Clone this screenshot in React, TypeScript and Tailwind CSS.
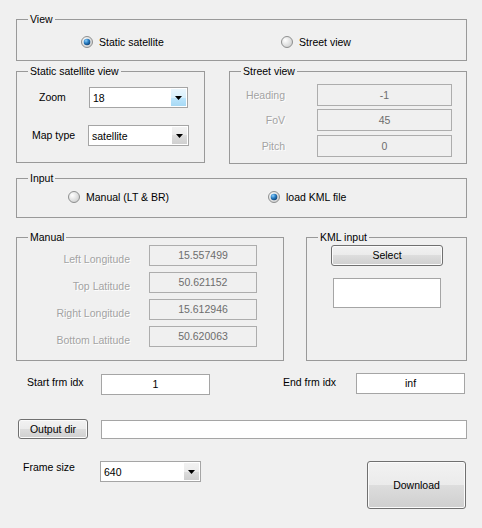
import { useId, type ReactNode } from "react";

const FONT = "font-['Liberation_Sans',Arial,sans-serif]";
const BTN_BG =
  "bg-[linear-gradient(to_bottom,#f2f2f2_0%,#ebebeb_50%,#dddddd_50%,#cfcfcf_100%)]";

function Group({
  title,
  className,
  children,
}: {
  title: string;
  className?: string;
  children?: ReactNode;
}) {
  return (
    <fieldset className={`shrink-0 border border-[#999999] ${className ?? ""}`}>
      <legend className="ml-[11px] px-[2px] leading-[12px]">{title}</legend>
      {children}
    </fieldset>
  );
}

function Radio({
  on,
  label,
  className,
}: {
  on?: boolean;
  label: string;
  className?: string;
}) {
  const id = useId().replace(/:/g, "");
  return (
    <div className={`flex h-[12px] items-center ${className ?? ""}`}>
      <svg width="12" height="12" viewBox="0 0 12 12" className="shrink-0">
        <defs>
          <radialGradient id={`g${id}`} cx="0.35" cy="0.35" r="0.7">
            <stop offset="0" stopColor="#ffffff" />
            <stop offset="1" stopColor="#cfd0d0" />
          </radialGradient>
          <radialGradient id={`b${id}`} cx="0.35" cy="0.3" r="0.75">
            <stop offset="0" stopColor="#8fd0fb" />
            <stop offset="0.5" stopColor="#2a7fc4" />
            <stop offset="1" stopColor="#0d3f72" />
          </radialGradient>
        </defs>
        <circle cx="6" cy="6" r="5.5" fill={`url(#g${id})`} stroke="#8e8f8f" />
        {on && <circle cx="6" cy="6" r="3.3" fill={`url(#b${id})`} />}
      </svg>
      <span className="ml-[6px] leading-[13px]">{label}</span>
    </div>
  );
}

function Combo({
  value,
  hot,
  className,
}: {
  value: string;
  hot?: boolean;
  className?: string;
}) {
  return (
    <div
      className={`flex h-[21px] shrink-0 border border-[#a5a5a5] bg-white ${className ?? ""}`}
    >
      <div className="flex-1 pl-[3px] pt-[1px] leading-[18px]">{value}</div>
      <div
        className={`m-[1px] ml-0 flex w-[15px] items-center justify-center ${
          hot
            ? "bg-[linear-gradient(to_bottom,#eaf6fd_0%,#d9f0fc_50%,#bee6fd_50%,#a7d9f5_100%)]"
            : BTN_BG
        }`}
      >
        <svg width="7" height="4" viewBox="0 0 7 4">
          <path d="M0 0h7L3.5 4z" fill="#000" />
        </svg>
      </div>
    </div>
  );
}

function Btn({ children, className }: { children: ReactNode; className?: string }) {
  return (
    <button
      type="button"
      className={`flex shrink-0 items-center justify-center rounded-[3px] border border-[#707070] ${BTN_BG} shadow-[inset_0_0_0_1px_#fbfbfb] leading-[13px] text-black ${className ?? ""}`}
    >
      {children}
    </button>
  );
}

function Edit({
  value,
  disabled,
  className,
}: {
  value?: string;
  disabled?: boolean;
  className?: string;
}) {
  return (
    <div
      className={`flex shrink-0 items-center justify-center border leading-[13px] ${
        disabled
          ? "border-[#adadad] bg-[#f0f0f0] text-[#6d6d6d]"
          : "border-[#a5a5a5] bg-white text-black"
      } ${className ?? ""}`}
    >
      {value}
    </div>
  );
}

const dim = "text-[#a3a3a3] [text-shadow:1px_1px_0_#ffffff]";

export default function App() {
  const street = [
    { label: "Heading", value: "-1", mt: "mt-[7px]" },
    { label: "FoV", value: "45", mt: "mt-[3px]" },
    { label: "Pitch", value: "0", mt: "mt-[4px]" },
  ];
  const manual = [
    { label: "Left Longitude", value: "15.557499" },
    { label: "Top Latitude", value: "50.621152" },
    { label: "Right Longitude", value: "15.612946" },
    { label: "Bottom Latitude", value: "50.620063" },
  ];

  return (
    <div
      className={`h-[528px] w-[482px] overflow-hidden bg-[#f0f0f0] pl-4 pt-[13px] text-[10.5px] text-black ${FONT}`}
    >
      <Group title="View" className="h-[48px] w-[451px]">
        <div className="ml-[64px] mt-[11px] flex">
          <Radio on label="Static satellite" className="w-[200px]" />
          <Radio label="Street view" />
        </div>
      </Group>

      <div className="mt-[4px] flex items-start">
        <Group title="Static satellite view" className="h-[98px] w-[189px]">
          <div className="mt-[10px] flex items-center">
            <span className="ml-[22px] w-[50px] leading-[13px]">Zoom</span>
            <Combo value="18" hot className="w-[99px]" />
          </div>
          <div className="mt-[17px] flex items-center">
            <span className="ml-[15px] w-[56px] leading-[13px]">Map type</span>
            <Combo value="satellite" className="w-[101px]" />
          </div>
        </Group>

        <Group title="Street view" className="ml-[24px] h-[99px] w-[238px]">
          {street.map((r) => (
            <div key={r.label} className={`flex items-center ${r.mt}`}>
              <span className={`w-[55px] text-right leading-[13px] ${dim}`}>{r.label}</span>
              <Edit disabled value={r.value} className="ml-[32px] h-[22px] w-[135px]" />
            </div>
          ))}
        </Group>
      </div>

      <Group title="Input" className="mt-[8px] h-[46px] w-[451px]">
        <div className="ml-[51px] mt-[7px] flex">
          <Radio label="Manual (LT & BR)" className="w-[200px]" />
          <Radio on label="load KML file" />
        </div>
      </Group>

      <div className="mt-[13px] flex items-start">
        <Group title="Manual" className="h-[130px] w-[268px]">
          {manual.map((r, i) => (
            <div
              key={r.label}
              className={`flex items-start ${i === 0 ? "mt-[2px]" : "mt-[6px]"}`}
            >
              <span className={`mt-[8px] w-[113px] text-right leading-[13px] ${dim}`}>
                {r.label}
              </span>
              <Edit disabled value={r.value} className="ml-[19px] h-[21px] w-[108px]" />
            </div>
          ))}
        </Group>

        <Group title="KML input" className="ml-[22px] h-[130px] w-[161px]">
          <Btn className="ml-[24px] mt-[2px] h-[21px] w-[112px]">Select</Btn>
          <Edit className="ml-[26px] mt-[12px] h-[30px] w-[108px]" />
        </Group>
      </div>

      <div className="mt-[13px] flex items-start">
        <span className="ml-[11px] mt-[2px] w-[74px] leading-[13px]">Start frm idx</span>
        <Edit value="1" className="h-[21px] w-[109px]" />
        <span className="ml-[73px] mt-[2px] w-[73px] leading-[13px]">End frm idx</span>
        <Edit value="inf" className="-mt-px h-[21px] w-[109px]" />
      </div>

      <div className="mt-[24px] flex items-start">
        <Btn className="ml-[2px] h-[20px] w-[70px]">Output dir</Btn>
        <Edit className="ml-[13px] mt-px h-[19px] w-[366px]" />
      </div>

      <div className="mt-[22px] flex items-start">
        <span className="ml-[7px] w-[77px] leading-[13px]">Frame size</span>
        <Combo value="640" className="w-[101px]" />
        <Btn className="ml-[166px] h-[48px] w-[99px]">Download</Btn>
      </div>
    </div>
  );
}
